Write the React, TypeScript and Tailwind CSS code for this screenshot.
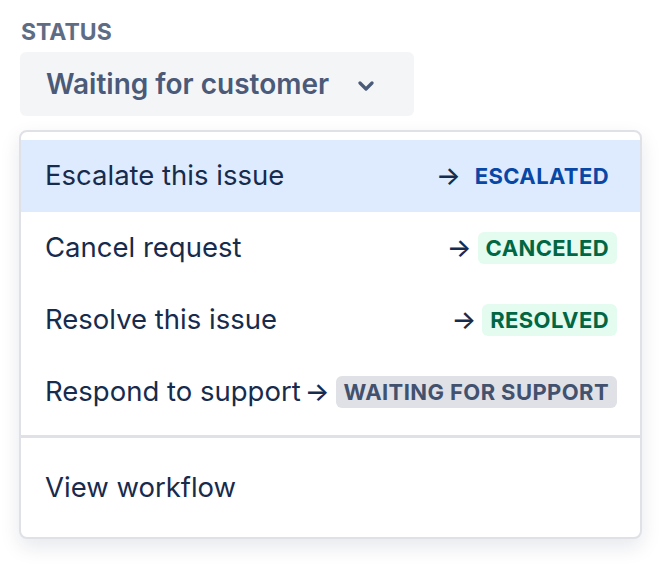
import React from 'react';

type Item = { label: string; status: string; tone: 'blue' | 'green' | 'gray'; active?: boolean };

const items: Item[] = [
    { label: 'Escalate this issue', status: 'ESCALATED', tone: 'blue', active: true },
    { label: 'Cancel request', status: 'CANCELED', tone: 'green' },
    { label: 'Resolve this issue', status: 'RESOLVED', tone: 'green' },
    { label: 'Respond to support', status: 'WAITING FOR SUPPORT', tone: 'gray' },
];

const toneClass = {
    blue: 'bg-[#deebff] text-[#0747a6]',
    green: 'bg-[#e3fcef] text-[#006644]',
    gray: 'bg-[#dfe1e6] text-[#42526e]',
};

export default function App() {
    return (
        <div className="w-[670px] h-[574px] bg-white pl-[20px] pt-[19px] font-['Inter','Noto_Sans',sans-serif]">
            {/* Field label */}
            <div className="text-[23px] leading-[26px] font-bold text-[#5e6c84] pl-[1px]">STATUS</div>

            {/* Trigger */}
            <div className="mt-[7px] w-[394px] h-[64px] rounded-[6px] bg-[#f4f5f7] flex items-center pl-[26px] pr-[40px] justify-between">
                <span className="text-[28px] font-semibold text-[#4a5a78]">Waiting for customer</span>
                <svg width="16" height="10" viewBox="0 0 16 10" className="mt-[3px]">
                    <path d="M2 2 L8 8 L14 2" fill="none" stroke="#4a5a78" strokeWidth="3.2" strokeLinecap="round" strokeLinejoin="round" />
                </svg>
            </div>

            {/* Dropdown menu */}
            <div className="mt-[14px] -ml-[1px] w-[623px] rounded-[8px] border-2 border-[#dfe1e6] bg-white shadow-[0_8px_20px_rgba(9,30,66,0.10)] overflow-hidden">
                <div className="pt-[8px] pb-[7px]">
                    {items.map((item) => (
                        <div
                            key={item.label}
                            className={`h-[72px] flex items-center justify-between pl-[24px] pr-[23px] ${item.active ? 'bg-[#deebff]' : ''}`}
                        >
                            <span className="text-[27.5px] text-[#172b4d] whitespace-nowrap">{item.label}</span>
                            <div className="flex items-center gap-[6px] ml-[4px] shrink-0">
                                <span className="text-[26px] font-medium text-[#172b4d] leading-none">→</span>
                                <span className={`h-[32px] px-[8px] rounded-[6px] flex items-center whitespace-nowrap text-[22px] font-bold tracking-[0.4px] ${toneClass[item.tone]}`}>
                                    {item.status}
                                </span>
                            </div>
                        </div>
                    ))}
                </div>
                <div className="h-[3px] bg-[#dfe1e6]" />
                <div className="pt-[14px] pb-[13px]">
                    <div className="h-[72px] flex items-center pl-[24px]">
                        <span className="text-[27.5px] text-[#172b4d]">View workflow</span>
                    </div>
                </div>
            </div>
        </div>
    );
}
